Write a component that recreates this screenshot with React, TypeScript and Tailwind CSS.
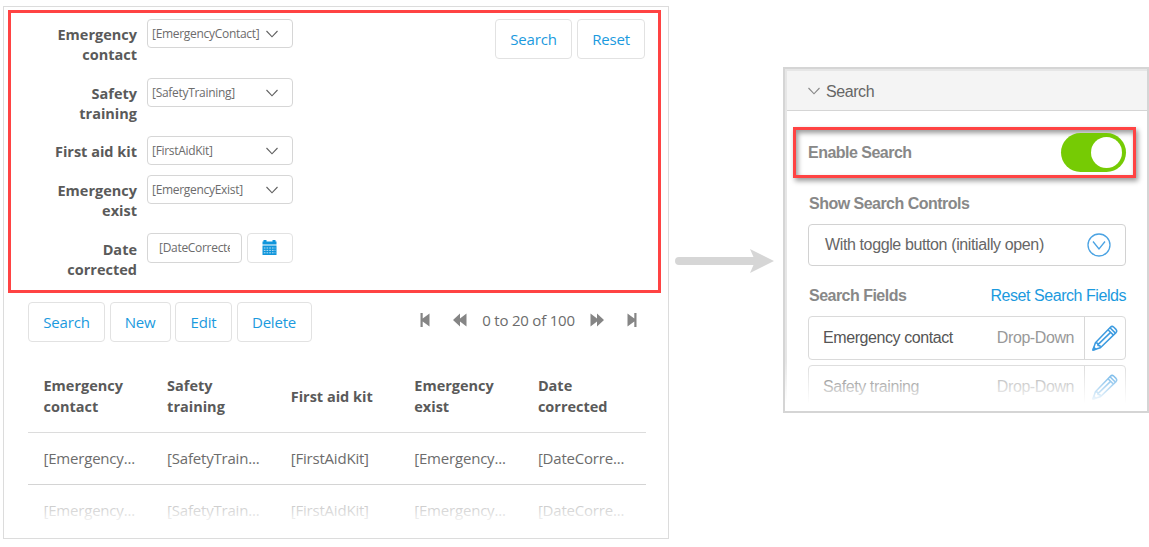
import React from "react";

function Chevron({ color = "#606060" }: { color?: string }) {
  return (
    <svg width="12" height="8" viewBox="0 0 12 8" fill="none" stroke={color} strokeWidth="1.1">
      <path d="M0.5 1 L6 6.8 L11.5 1" />
    </svg>
  );
}

function Row({ label, value, height }: { label: React.ReactNode; value: string; height: string }) {
  return (
    <div className={`flex ${height}`}>
      <div className="w-[126px] pt-[6px] text-right text-[14.5px] leading-5 font-bold text-[#5a5a5a]">{label}</div>
      <div className="ml-[10px] flex h-[29px] w-[146px] items-center justify-between rounded-[4px] border border-[#d6d6d6] pr-[14px] pl-1 text-[12px] tracking-[-0.3px] text-[#6c6c6c]">
        <span className="whitespace-nowrap">{value}</span>
        <Chevron />
      </div>
    </div>
  );
}

function Button({ children, width }: { children: string; width: string }) {
  return (
    <button className={`flex h-10 items-center justify-center rounded-[4px] border border-[#e2e2e2] bg-white text-[15px] tracking-[-0.2px] text-[#1b9ade] ${width}`}>
      {children}
    </button>
  );
}

function Calendar() {
  return (
    <svg width="15" height="16" viewBox="0 0 15 16" className="-translate-x-px">
      <path fill="#0f95db" d="M0.5 1.5h1V0h3v1.5h6V0h3v1.5h1v3h-14zM0.5 5.5h14V15h-14z" />
      <path stroke="#fff" strokeWidth="0.7" strokeDasharray="1.7 1" d="M1.8 8h11.6M1.8 10.4h11.6M1.8 12.8h11.6" />
    </svg>
  );
}

function Pencil() {
  return (
    <svg width="26" height="26" viewBox="0 0 26 26" fill="none" stroke="#3c9be0" strokeWidth="1.5" strokeLinejoin="round">
      <path d="M1 25 L3.4 17.8 L18.4 2.2 Q20 0.6 21.6 2 L24 4.4 Q25.4 6 24 7.6 L8.4 22.8 Z" />
      <path d="M3.4 17.8 L5.6 18.2 L6 20.4 L8 20.8 L8.4 22.8 M16 4.7 L21.4 10.1 M18 2.7 L23.4 8.1 M6 19.6 L18.6 7.4" />
      <path d="M1 25 L1.8 22.2 L3.8 24.2 Z" fill="#3c9be0" />
    </svg>
  );
}

function PageIcon({ kind }: { kind: "first" | "prev" | "next" | "last" }) {
  const flip = kind === "next" || kind === "last";
  const edge = kind === "first" || kind === "last";
  return (
    <svg width={edge ? 10 : 14} height="14" viewBox={edge ? "0 0 10 14" : "0 0 14 14"} fill="#858585" className={flip ? "-scale-x-100" : ""}>
      {edge ? <path d="M0.5 0h2.2v5.6L9.5 0.4v13.2L2.7 8.4V14h-2.2z" /> : <path d="M0 7L7 0.4v5.2L13.5 0.4v13.2L7 8.4v5.2z" />}
    </svg>
  );
}

const columns: [React.ReactNode, string][] = [
  [<>Emergency<br />contact</>, "[Emergency..."],
  [<>Safety<br />training</>, "[SafetyTrain..."],
  ["First aid kit", "[FirstAidKit]"],
  [<>Emergency<br />exist</>, "[Emergency..."],
  [<>Date<br />corrected</>, "[DateCorre..."],
];

function Field({ name }: { name: string }) {
  return (
    <div className="flex h-11 items-center rounded-[4px] border-[1.5px] border-[#dadada] pl-[14px]">
      <span className="flex-1 text-[#555]">{name}</span>
      <span className="text-[#999]">Drop-Down</span>
      <span className="ml-[10px] flex h-full w-[41px] items-center justify-center border-l border-[#d8d8d8]">
        <Pencil />
      </span>
    </div>
  );
}

export default function App() {
  return (
    <div className="flex h-[547px] w-[1149px] overflow-hidden bg-white pl-[3px] font-['Open_Sans',sans-serif]">
      <section className="relative mt-[6px] h-[533px] w-[666px] shrink-0 overflow-hidden border border-[#dcdcdc]">
        <div className="mt-[3px] ml-1 flex h-[283px] w-[653px] justify-between border-[3px] border-[#ff4343] pt-[6px] pr-[13px]">
          <div>
            <Row label={<>Emergency<br />contact</>} value="[EmergencyContact]" height="h-[59px]" />
            <Row label={<>Safety<br />training</>} value="[SafetyTraining]" height="h-[58px]" />
            <Row label="First aid kit" value="[FirstAidKit]" height="h-[39px]" />
            <Row label={<>Emergency<br />exist</>} value="[EmergencyExist]" height="h-[58px]" />
            <div className="flex">
              <div className="w-[126px] pt-[7px] text-right text-[14.5px] leading-5 font-bold text-[#5a5a5a]">Date<br />corrected</div>
              <div className="ml-[10px] flex h-[30px] w-[95px] items-center rounded-[4px] border border-[#d6d6d6] px-[11px] text-[12px] tracking-[-0.3px] text-[#6c6c6c]">
                <span className="w-[72px] overflow-hidden whitespace-nowrap">[DateCorrected]</span>
              </div>
              <div className="ml-[5px] flex h-[30px] w-[46px] items-center justify-center rounded-[4px] border border-[#e2e2e2]">
                <Calendar />
              </div>
            </div>
          </div>
          <div className="flex gap-[5px]">
            <Button width="w-[77px]">Search</Button>
            <Button width="w-[68px]">Reset</Button>
          </div>
        </div>
        <div className="mt-[9px] mr-[31px] ml-6 flex justify-between">
          <div className="flex gap-[4.5px]">
            <Button width="w-[77px]">Search</Button>
            <Button width="w-[61px]">New</Button>
            <Button width="w-[57px]">Edit</Button>
            <Button width="w-[75px]">Delete</Button>
          </div>
          <div className="flex h-9 items-center text-[15px] tracking-[-0.2px] text-[#6c6c6c]">
            <PageIcon kind="first" />
            <span className="w-[23px]" />
            <PageIcon kind="prev" />
            <span className="w-[123px] text-center whitespace-nowrap">0 to 20 of 100</span>
            <PageIcon kind="next" />
            <span className="w-[23px]" />
            <PageIcon kind="last" />
          </div>
        </div>
        <div className="mt-[18px] mr-[22px] ml-6 text-[15px] tracking-[-0.2px] text-[#6c6c6c]">
          <div className="flex h-[73px] items-center border-b border-[#dcdcdc] text-[14.5px] leading-[21px] font-bold tracking-normal text-[#5a5a5a]">
            {columns.map(([head], i) => (
              <div key={i} className="w-[123.6px] pl-[15.5px]">{head}</div>
            ))}
          </div>
          {[0, 1].map((r) => (
            <div key={r} className={`flex h-[52px] items-center ${r === 0 ? "border-b border-[#d4d4d4]" : "pb-[2px]"}`}>
              {columns.map(([, v], i) => (
                <div key={i} className="w-[123.6px] pl-[15.5px] whitespace-nowrap">{v}</div>
              ))}
            </div>
          ))}
        </div>
        <div className="absolute inset-x-0 bottom-0 h-[52px] bg-linear-to-b from-white/40 via-white/75 via-50% to-white to-75%" />
      </section>

      <div className="flex w-[114px] shrink-0 pt-[249px] pl-[6px]">
        <svg width="99" height="24" viewBox="0 0 99 24" fill="#d6d6d6">
          <path d="M4 8H78.5L75 0L99 12L75 24L78.5 16H4A4 4 0 0 1 4 8Z" />
        </svg>
      </div>

      <section className="relative mt-[67px] h-[346px] w-[366px] shrink-0 overflow-hidden border-2 border-[#d5d5d5] font-['Liberation_Sans',sans-serif] text-[16px] tracking-[-0.42px]">
        <div className="h-full border-t-2 border-l-2 border-[#e6e6e6]">
          <header className="flex h-10 items-center gap-[6px] border-b border-[#d5d5d5] bg-[#f4f4f4] pl-[21px] text-[#666]">
            <Chevron color="#888" />
            <span className="pt-[2px]">Search</span>
          </header>
          <div className="mt-[16px] ml-[6px] flex h-[51px] w-[343px] items-center justify-between border-[3px] border-[#ff4343] pr-[7px] pl-3 shadow-[2px_3px_5px_rgba(0,0,0,0.4),inset_2px_3px_5px_rgba(0,0,0,0.4)]">
            <span className="font-bold tracking-[-0.52px] text-[#888]">Enable Search</span>
            <span className="flex h-[39px] w-[65px] items-center justify-end rounded-full bg-[#76cb04] pr-1">
              <span className="size-[31px] rounded-full bg-white" />
            </span>
          </div>
          <div className="mr-[21px] ml-[21px]">
            <div className="mt-[16px] h-[20px] pl-px leading-5 font-bold tracking-[-0.52px] text-[#888]">Show Search Controls</div>
            <div className="mt-[10px] flex h-[42px] items-center justify-between rounded-[4px] border border-[#d2d2d2] pr-[14px] pl-4 text-[#666]">
              <span className="pb-px tracking-[-0.38px]">With toggle button (initially open)</span>
              <svg width="24" height="24" viewBox="0 0 24 24" fill="none" stroke="#4ba3e3" strokeWidth="1.3">
                <circle cx="12" cy="12" r="11" />
                <path d="M6 8.5L12 16L18 8.5" />
              </svg>
            </div>
            <div className="mt-[20px] flex h-5 items-center justify-between pl-px">
              <span className="font-bold tracking-[-0.52px] text-[#888]">Search Fields</span>
              <span className="tracking-[-0.45px] text-[#1b9ade]">Reset Search Fields</span>
            </div>
            <div className="mt-[10px] flex flex-col gap-[5px]">
              <Field name="Emergency contact" />
              <Field name="Safety training" />
            </div>
          </div>
        </div>
        <div className="absolute inset-x-0 bottom-0 h-[50px] bg-linear-to-b from-white/0 to-white to-85%" />
      </section>
    </div>
  );
}
